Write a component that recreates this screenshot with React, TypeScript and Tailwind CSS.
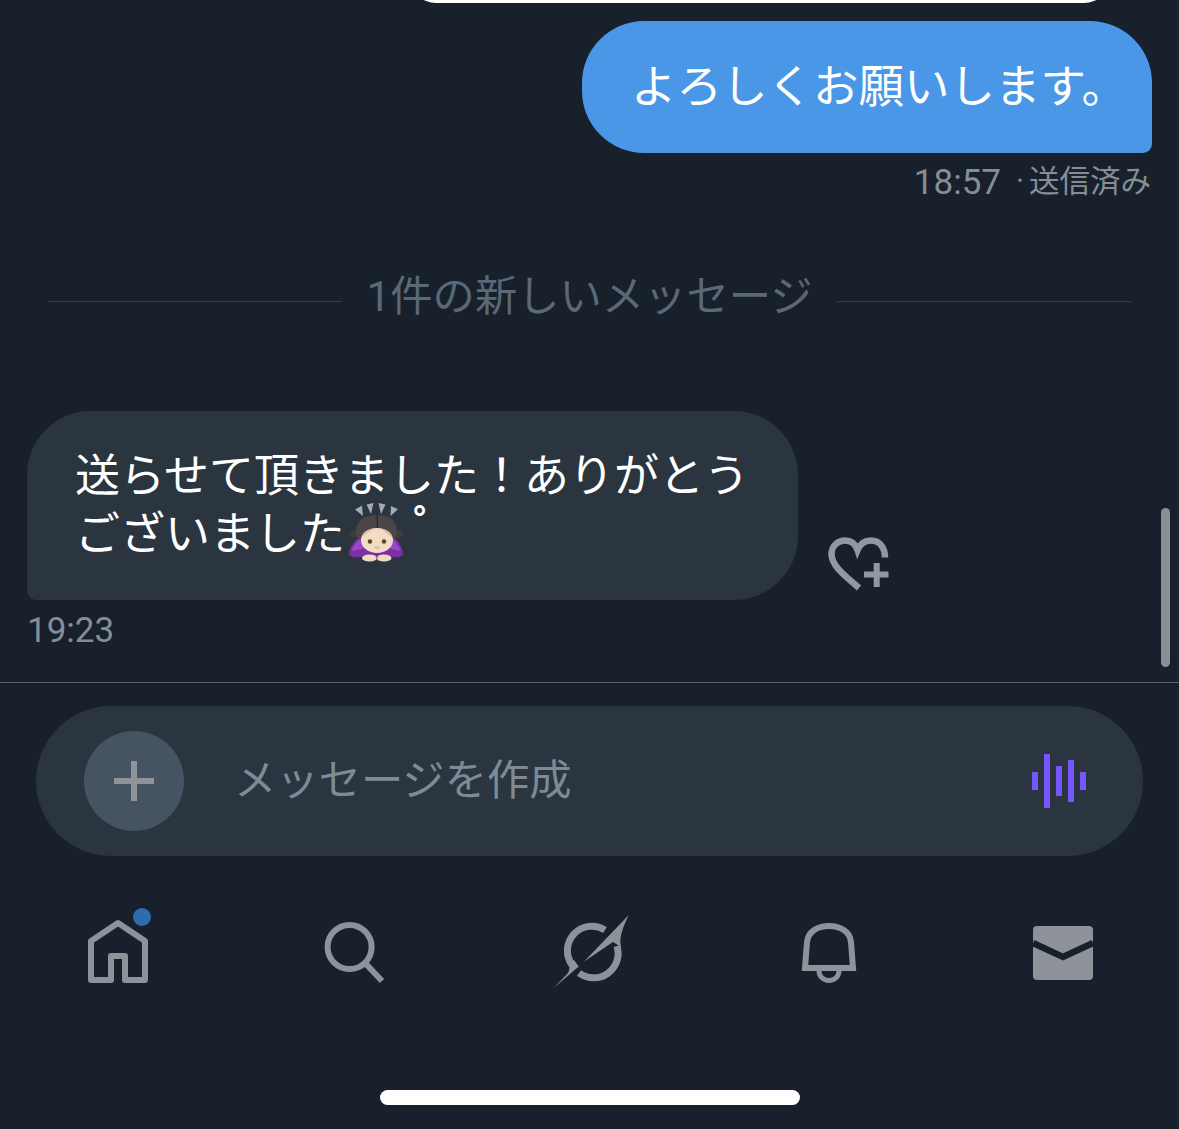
const font = "font-['Roboto','Noto_Sans_CJK_JP',sans-serif]";

function BowEmoji() {
  return (
    <svg width="56" height="60" viewBox="0 0 56 60" className="inline-block align-top">
      <g fill="#a3abae">
        <path d="M15 13 L7 6.5 L14 2.5 Z" />
        <path d="M23 11 L18.5 1.5 L25.5 0 Z" />
        <path d="M33 11 L30.5 0 L37.5 1.5 Z" />
        <path d="M42.5 13 L43 3 L50 6.3 Z" />
      </g>
      <path d="M13 33 C6 38 2 44 1 50 C1 54 7 55 14 54 L42 54 C50 55 55 54 55 50 C54 44 50 38 45 33 Z" fill="#7d2fa6" />
      <path d="M12 36 C7 41 4 45 4 48 L14 46 L20 38 Z M45 36 C49 41 52 45 52 48 L43 46 L38 38 Z" fill="#9b48c9" />
      <circle cx="6" cy="31" r="4" fill="#3f3a3c" />
      <circle cx="51" cy="31" r="4" fill="#3f3a3c" />
      <path d="M8 30 C8 17 16 12 29 12 C42 12 49 17 49 30 C49 34 47 36 45 36 L13 36 C10 36 8 34 8 30 Z" fill="#4b4547" />
      <path d="M28.6 12 L30 12 L30 27 L28.6 27 Z" fill="#2c282a" />
      <path d="M29 25 C38 25 45 30 45 37 C45 45 37 50 29 50 C21 50 13 45 13 37 C13 30 20 25 29 25 Z" fill="#f3dcc6" />
      <path d="M29 25 C24 26 19 29 15 34 C13 30 19 26 29 25 C39 26 45 30 43 34 C39 29 34 26 29 25 Z" fill="#d9b89f" />
      <circle cx="22" cy="38.5" r="2.2" fill="#5a4327" />
      <circle cx="36" cy="38.5" r="2.2" fill="#5a4327" />
      <ellipse cx="29" cy="44.5" rx="2.6" ry="1.3" fill="#e4b89b" />
      <ellipse cx="21.5" cy="55" rx="7.5" ry="3.6" fill="#f1dac4" />
      <ellipse cx="36" cy="55" rx="7.5" ry="3.6" fill="#f1dac4" />
      <path d="M28.6 52 H29.4 V58 H28.6 Z" fill="#6b2a8d" />
    </svg>
  );
}

function HeartPlus() {
  return (
    <svg width="62" height="54" viewBox="0 0 62 54" fill="none" stroke="#8e99a5" strokeWidth="6.5" className="mb-[9px] ml-[30px] shrink-0">
      <path d="M31 51 C20 41 3.5 30 3.5 17 C3.5 9 10 3.5 17 3.5 C23 3.5 27.5 7 29.5 13 C32 7 37 3.5 43 3.5 C52 3.5 57 11 57 20.5" />
      <path d="M36 37.5 H60.5 M48.7 26 V50" strokeWidth="6" />
    </svg>
  );
}

function Nav() {
  const c = "#8d9399";
  return (
    <nav className="mt-[50px] flex justify-between pl-[78px] pr-[76px]">
      <svg width="80" height="84" viewBox="0 0 80 84" fill="none" stroke={c} strokeWidth="6" strokeLinejoin="round">
        <path d="M13 74 V35 L40 17 L67 35 V74 H47 V50 H33 V74 Z" />
        <circle cx="64" cy="11" r="9" fill="#2f6cae" stroke="none" />
      </svg>
      <svg width="80" height="84" viewBox="0 0 80 84" fill="none" stroke={c} strokeWidth="6">
        <circle cx="35.6" cy="41" r="22" />
        <path d="M52 58 L68 75" />
      </svg>
      <svg width="80" height="84" viewBox="0 0 80 84" fill="none" stroke={c} strokeWidth="7">
        <path d="M54 24 A24.5 24.5 0 0 0 21 59" />
        <path d="M28 67 A24.5 24.5 0 0 0 66 40" />
        <path d="M77.8 9 L32.8 55.7 L62 36 L70 41 Q67 30 77.8 9 Z" fill={c} stroke="none" />
        <path d="M2.8 81.7 L27.8 60.5 L23 54 L16.5 56 Q20 62 17 67 Z" fill={c} stroke="none" />
      </svg>
      <svg width="80" height="84" viewBox="-2 0 80 84" fill="none" stroke={c} strokeWidth="6">
        <path d="M16 62 L18 36 C19 26 28 20 40 20 C52 20 61 26 62 36 L64 62 Z" />
        <path d="M30 65 A10 9.5 0 0 0 50 65" strokeWidth="5" />
      </svg>
      <svg width="80" height="84" viewBox="0 0 80 84" fill="none">
        <rect x="10" y="20" width="60" height="54" rx="4" fill={c} />
        <path d="M10 37 L40 51 L70 37" stroke="#17202b" strokeWidth="6.5" />
      </svg>
    </nav>
  );
}

export default function App() {
  return (
    <div className={`relative flex h-[1129px] w-[1179px] flex-col overflow-hidden bg-[#17202b] ${font}`}>
      <div className="ml-[410px] flex h-[3px] w-[700px] items-end overflow-hidden">
        <div className="h-[40px] w-full shrink-0 rounded-b-[26px] bg-white" />
      </div>

      <div className="mt-[18px] mr-[27px] flex h-[132px] w-[570px] items-center self-end rounded-[62px] rounded-br-[9px] bg-[#4a97e8] pl-[49px] pt-[2px] text-[45.5px] leading-none text-white">
        よろしくお願いします。
      </div>
      <div className="mt-[12px] mr-[28px] flex h-[34px] items-center self-end leading-none text-[#858e97]">
        <span className="text-[35px]">18:57</span>
        <span className="ml-[15px] text-[30.5px]">·</span>
        <span className="ml-[5px] text-[30.5px]">送信済み</span>
      </div>

      <div className="mt-[74px] flex h-[46px] items-center pl-[48px] pr-[48px]">
        <div className="mt-[10px] h-px w-[294px] bg-[#333d48]" />
        <span className="mt-[3px] flex-1 text-center text-[42.3px] leading-none text-[#5a6878]">1件の新しいメッセージ</span>
        <div className="mt-[10px] h-px w-[294px] bg-[#333d48]" />
      </div>

      <div className="mt-[92px] flex items-end pl-[27px]">
        <div className="h-[189px] w-[771px] shrink-0 rounded-[64px] rounded-bl-[9px] bg-[#2a3540] pl-[48px] pt-[37px] text-[45px] leading-[58px] text-white">
          <div>送らせて頂きました！ありがとう</div>
          <div className="flex">
            <span>ございました</span>
            <span className="mt-[-3px] ml-[3px]"><BowEmoji /></span>
            <span className="mt-[-7px] ml-[9px] font-bold">゜</span>
          </div>
        </div>
        <HeartPlus />
      </div>
      <div className="mt-[14px] h-[34px] pl-[27px] text-[35px] leading-[34px] text-[#858e97]">19:23</div>

      <div className="mt-[34px] h-px w-full bg-[#5d646c]" />

      <div className="ml-[36px] mt-[23px] flex h-[150px] w-[1107px] items-center rounded-full bg-[#2a3540] pl-[48px] pr-[57px]">
        <div className="flex h-[100px] w-[100px] shrink-0 items-center justify-center rounded-full bg-[#465362]">
          <svg width="40" height="40" viewBox="0 0 40 40" stroke="#8f9499" strokeWidth="6">
            <path d="M0 20 H40 M20 0 V40" />
          </svg>
        </div>
        <span className="ml-[50px] flex-1 text-[42.3px] leading-none text-[#7e8a96]">メッセージを作成</span>
        <div className="flex items-center gap-[6px]">
          <div className="h-[18px] w-[6px] bg-[#7856ff]" />
          <div className="h-[54px] w-[6px] bg-[#7856ff]" />
          <div className="h-[30px] w-[6px] bg-[#7856ff]" />
          <div className="h-[42px] w-[6px] bg-[#7856ff]" />
          <div className="h-[18px] w-[6px] bg-[#7856ff]" />
        </div>
      </div>

      <Nav />

      <div className="ml-[380px] mt-[100px] h-[15px] w-[420px] rounded-full bg-white" />

      <div className="absolute left-[1161px] top-[508px] h-[159px] w-[9px] rounded-full bg-[#8b9097]" />
    </div>
  );
}
